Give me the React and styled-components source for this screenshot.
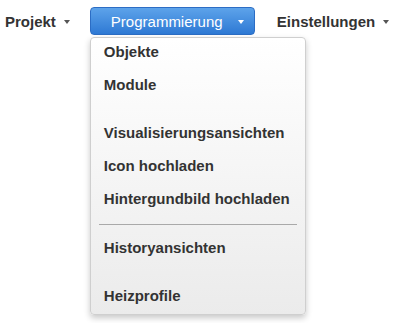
import React from "react";
import styled, { createGlobalStyle } from "styled-components";

const GlobalStyle = createGlobalStyle`
  html, body, #root {
    height: 100%;
  }
  body {
    margin: 0;
    background: #fff;
    font-family: "Liberation Sans", Arial, sans-serif;
  }
`;

const Page = styled.div`
  min-height: 100vh;
`;

const Nav = styled.nav`
  display: flex;
  align-items: flex-start;
  padding: 7px 0 0 5px;
`;

const NavItem = styled.div`
  display: flex;
  align-items: center;
  gap: 8px;
  height: 28px;
  font-size: 15px;
  font-weight: bold;
  color: #333;
  margin-right: ${(p) => p.$gap || 0}px;
  cursor: pointer;
`;

const Caret = styled.span`
  display: inline-block;
  width: 0;
  height: 0;
  border-left: 3.5px solid transparent;
  border-right: 3.5px solid transparent;
  border-top: 4px solid ${(p) => p.$color || "#555"};
  margin-top: 2px;
`;

const Dropdown = styled.div`
  position: relative;
  margin-right: 22px;
`;

const ActiveButton = styled.div`
  display: flex;
  align-items: center;
  gap: 15px;
  box-sizing: border-box;
  width: 165px;
  height: 28px;
  padding: 0 0 0 20px;
  border: 1px solid #2c6dc4;
  border-radius: 4px;
  background: linear-gradient(#5da3ea, #2e79d4);
  color: #fff;
  font-size: 15px;
  cursor: pointer;
`;

const Menu = styled.ul`
  position: absolute;
  top: 30px;
  left: 0;
  z-index: 10;
  width: 216px;
  box-sizing: border-box;
  margin: 0;
  padding: 0 0 4px;
  list-style: none;
  border: 1px solid #cfcfcf;
  border-radius: 4px;
  background: linear-gradient(#ffffff, #ebebeb);
  box-shadow: 0 3px 6px rgba(0, 0, 0, 0.22);
`;

const MenuItem = styled.li`
  height: 28px;
  line-height: 28px;
  padding: 0 13px;
  margin-top: ${(p) => (p.$spaced ? 20 : 5)}px;
  font-size: 15px;
  font-weight: bold;
  color: #333;
  white-space: nowrap;
  &:first-child {
    margin-top: 0;
  }
`;

const Divider = styled.li`
  height: 1px;
  margin: 11px 8px 9px;
  background: #a9a9a9;
`;

const items = [
  { label: "Objekte" },
  { label: "Module" },
  { label: "Visualisierungsansichten", spaced: true },
  { label: "Icon hochladen" },
  { label: "Hintergundbild hochladen" },
  { divider: true },
  { label: "Historyansichten" },
  { label: "Heizprofile", spaced: true },
];

const App = () => {
  return (
    <Page>
      <GlobalStyle />
      <Nav>
        <NavItem $gap={20}>
          Projekt <Caret />
        </NavItem>
        <Dropdown>
          <ActiveButton>
            Programmierung <Caret $color="#fff" />
          </ActiveButton>
          <Menu>
            {items.map((it, i) =>
              it.divider ? (
                <Divider key={i} />
              ) : (
                <MenuItem key={i} $spaced={it.spaced}>
                  {it.label}
                </MenuItem>
              )
            )}
          </Menu>
        </Dropdown>
        <NavItem>
          Einstellungen <Caret />
        </NavItem>
      </Nav>
    </Page>
  );
};

export default App;
